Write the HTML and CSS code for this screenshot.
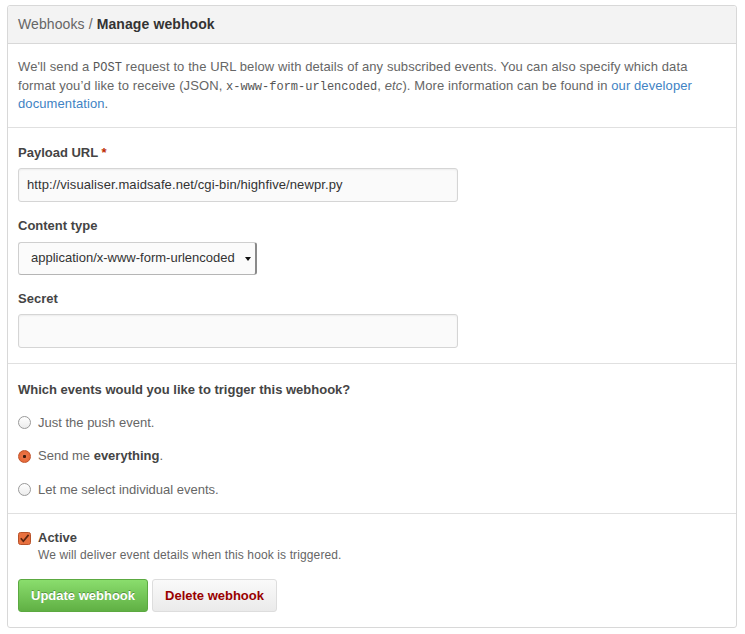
FILE: index.html
```html
<!DOCTYPE html>
<html>
<head>
<meta charset="utf-8">
<link rel="stylesheet" href="styles.css">
</head>
<body>
<div class="box">
  <div class="box-header"><span class="crumb">Webhooks /</span> <strong>Manage webhook</strong></div>
  <div class="section intro">
    <p>We'll send a <code>POST</code> request to the URL below with details of any subscribed events. You can also specify which data format you’d like to receive (JSON, <code>x-www-form-urlencoded</code>, <em>etc</em>). More information can be found in <a href="#">our developer documentation</a>.</p>
  </div>
  <div class="section form">
    <div class="group">
      <label class="label">Payload URL <span class="req">*</span></label>
      <div class="input">http://visualiser.maidsafe.net/cgi-bin/highfive/newpr.py</div>
    </div>
    <div class="group">
      <label class="label">Content type</label>
      <div class="select"><span>application/x-www-form-urlencoded</span><span class="arrow"></span></div>
    </div>
    <div class="group">
      <label class="label">Secret</label>
      <div class="input"></div>
    </div>
  </div>
  <div class="section events">
    <div class="label">Which events would you like to trigger this webhook?</div>
    <div class="radio-row"><span class="radio"></span><span>Just the push event.</span></div>
    <div class="radio-row"><span class="radio checked"></span><span>Send me <strong>everything</strong>.</span></div>
    <div class="radio-row"><span class="radio"></span><span>Let me select individual events.</span></div>
  </div>
  <div class="section active">
    <div class="check-row">
      <svg class="checkbox" width="13" height="13" viewBox="0 0 13 13">
        <rect x="0.5" y="0.5" width="12" height="12" rx="2" fill="#e8703f" stroke="#b9532a"/>
        <path d="M2.8 6.3 L5.3 9.2 L10.6 2.9" fill="none" stroke="#5a2410" stroke-width="1.7"/>
      </svg>
      <div>
        <div class="label">Active</div>
        <div class="note">We will deliver event details when this hook is triggered.</div>
      </div>
    </div>
    <div class="actions">
      <button class="btn btn-primary">Update webhook</button>
      <button class="btn btn-danger">Delete webhook</button>
    </div>
  </div>
</div>
</body>
</html>
```
FILE: styles.css
```css
html, body { background: #fff; }
body {
  margin: 5px 8px 0 7px;
  font-family: "Liberation Sans", Arial, sans-serif;
  font-size: 13px;
  line-height: 18.5px;
  color: #333;
}
.box {
  border: 1px solid #d8d8d8;
  border-radius: 3px;
  width: 728px;
}
.box-header {
  background: #f3f3f3;
  border-bottom: 1px solid #d8d8d8;
  padding: 8px 10px 9px;
  font-size: 14px;
  line-height: 20px;
  letter-spacing: 0.1px;
  border-radius: 3px 3px 0 0;
}
.crumb { color: #666; }
.box-header strong { color: #333; }
.section {
  padding: 15px 10px;
  border-bottom: 1px solid #e0e0e0;
}
.section:last-child { border-bottom: none; }
.intro { padding: 14px 10px 13px; color: #666; }
.intro p { margin: 0; letter-spacing: 0.1px; }
code {
  font-family: "Liberation Mono", "DejaVu Sans Mono", monospace;
  font-size: 12px;
  line-height: 1;
  letter-spacing: 0;
  color: #555;
}
a { color: #4183c4; text-decoration: none; }
.label { display: block; font-weight: bold; color: #444; }
.req { color: #bd2c00; }
.form { padding: 16px 10px 15px; }
.group { margin-bottom: 15px; }
.group:last-child { margin-bottom: 0; }
.group .label { margin-bottom: 6px; }
.input {
  box-sizing: border-box;
  width: 440px;
  height: 34px;
  border: 1px solid #d5d5d5;
  border-radius: 3px;
  background: #fafafa;
  box-shadow: inset 0 1px 2px rgba(0,0,0,0.06);
  padding: 0 8px;
  line-height: 32px;
  color: #333;
  letter-spacing: 0.1px;
}
.select {
  box-sizing: border-box;
  width: 239px;
  height: 33px;
  border: 1px solid #cfcfcf;
  border-right: 2px solid #8a8a8a;
  border-bottom: 1px solid #b5b5b5;
  border-radius: 3px;
  background: #fbfbfb;
  display: flex;
  align-items: center;
  justify-content: space-between;
  padding: 0 4px 0 12px;
  color: #333;
}
.arrow {
  width: 0; height: 0;
  border-left: 3px solid transparent;
  border-right: 3px solid transparent;
  border-top: 4px solid #111;
  margin-top: 1px;
}
.events { padding: 17px 10px 14px; }
.events > .label { margin-bottom: 14px; }
.radio-row {
  display: flex;
  align-items: center;
  gap: 7px;
  color: #666;
  margin-bottom: 15px;
}
.radio-row:last-child { margin-bottom: 0; }
.radio-row strong { color: #444; }
.radio {
  box-sizing: border-box;
  width: 13px; height: 13px;
  border-radius: 50%;
  border: 1px solid #9a9a9a;
  background: linear-gradient(#fff, #ececec);
  flex: none;
}
.radio.checked {
  border-color: #c2532b;
  background: radial-gradient(circle, #3a1a0c 0 1.3px, #ec7447 1.8px, #e0622f 100%);
}
.active { padding: 15px 10px 15px; }
.check-row { display: flex; align-items: flex-start; gap: 7px; }
.checkbox { flex: none; margin-top: 3px; }
.note { font-size: 12px; line-height: 15px; color: #666; letter-spacing: 0.12px; }
.actions { display: flex; gap: 4px; margin-top: 16px; }
.btn {
  height: 33px;
  padding: 0 12px;
  border-radius: 3px;
  font-family: "Liberation Sans", Arial, sans-serif;
  font-size: 13px;
  font-weight: bold;
  cursor: pointer;
}
.btn-primary {
  color: #fff;
  text-shadow: 0 -1px 0 rgba(0,0,0,0.3);
  background: linear-gradient(#8add6d, #60b044);
  border: 1px solid #5ca941;
}
.btn-danger {
  color: #900;
  background: linear-gradient(#fafafa, #eaeaea);
  border: 1px solid #ddd;
}
```
